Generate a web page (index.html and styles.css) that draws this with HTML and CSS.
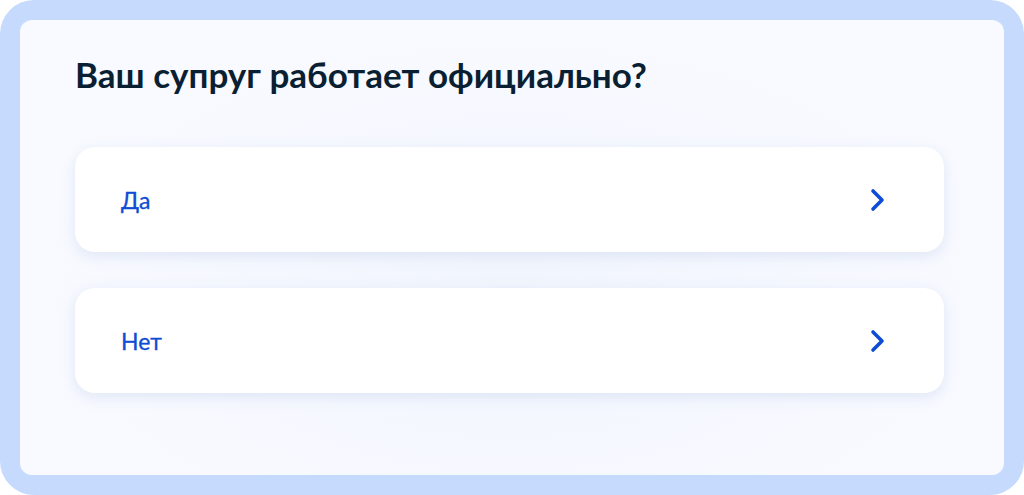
FILE: index.html
```html
<!DOCTYPE html>
<html lang="ru">
<head>
    <meta charset="UTF-8">
    <title>Супруг</title>
    <link rel="stylesheet" href="styles.css">
</head>
<body>
<div class="frame">
    <div class="panel">
        <h1 class="question">Ваш супруг работает официально?</h1>
        <ul class="answers">
            <li class="answer">
                <span class="answer-text">Да</span>
                <svg class="chevron" width="16" height="24" viewBox="0 0 16 24">
                    <path d="M3 3 L12 12 L3 21" fill="none" stroke="#0d4cd3" stroke-width="3.6" stroke-linecap="round" stroke-linejoin="round"/>
                </svg>
            </li>
            <li class="answer">
                <span class="answer-text">Нет</span>
                <svg class="chevron" width="16" height="24" viewBox="0 0 16 24">
                    <path d="M3 3 L12 12 L3 21" fill="none" stroke="#0d4cd3" stroke-width="3.6" stroke-linecap="round" stroke-linejoin="round"/>
                </svg>
            </li>
        </ul>
    </div>
</div>
</body>
</html>
```

FILE: styles.css
```css
* {
    padding: 0;
    margin: 0;
    list-style: none;
    box-sizing: border-box;
}

body {
    background: #fff;
    font-family: Lato, "Noto Sans", sans-serif;
}

.frame {
    width: 1024px;
    height: 495px;
    padding: 20px;
    background: #c5dafd;
    border-radius: 34px;
}

.panel {
    height: 100%;
    padding: 34px 60px 0 55px;
    border-radius: 12px;
    background: radial-gradient(ellipse at 50% 60%, #f1f5fd 0%, #f8faff 70%);
}

.question {
    font-size: 35px;
    font-weight: 700;
    line-height: 40px;
    color: #0b1f33;
}

.answers {
    margin-top: 53px;
    display: flex;
    flex-direction: column;
    gap: 36px;
}

.answer {
    height: 105px;
    display: flex;
    align-items: center;
    justify-content: space-between;
    padding: 0 58px 0 46px;
    background: #fff;
    border-radius: 20px;
    box-shadow: 0 4px 14px rgba(180, 196, 230, 0.35);
}

.answer-text {
    font-size: 23px;
    color: #0d4cd3;
    -webkit-text-stroke: 0.3px #0d4cd3;
}

.chevron {
    display: block;
}
```
